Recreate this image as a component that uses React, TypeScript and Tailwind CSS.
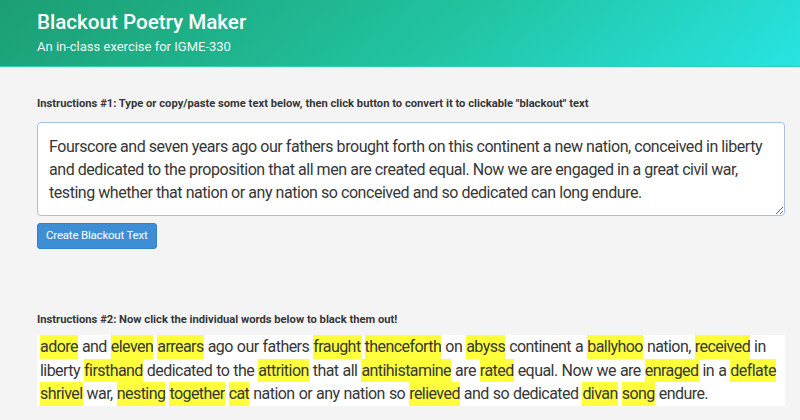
import React from "react";

const lines = [
  "Fourscore and seven years ago our fathers brought forth on this continent a new nation, conceived in liberty",
  "and dedicated to the proposition that all men are created equal. Now we are engaged in a great civil war,",
  "testing whether that nation or any nation so conceived and so dedicated can long endure.",
];

const wordLines: [string, boolean][][] = [
  [["adore", true], ["and", false], ["eleven", true], ["arrears", true], ["ago", false], ["our", false], ["fathers", false], ["fraught", true], ["thenceforth", true], ["on", false], ["abyss", true], ["continent", false], ["a", false], ["ballyhoo", true], ["nation,", false], ["received", true], ["in", false]],
  [["liberty", false], ["firsthand", true], ["dedicated", false], ["to", false], ["the", false], ["attrition", true], ["that", false], ["all", false], ["antihistamine", true], ["are", false], ["rated", true], ["equal.", false], ["Now", false], ["we", false], ["are", false], ["enraged", true], ["in", false], ["a", false], ["deflate", true]],
  [["shrivel", true], ["war,", false], ["nesting", true], ["together", true], ["cat", true], ["nation", false], ["or", false], ["any", false], ["nation", false], ["so", false], ["relieved", true], ["and", false], ["so", false], ["dedicated", false], ["divan", true], ["song", true], ["endure.", false]],
];

export default function App() {
  const font = { fontFamily: 'Roboto, "Noto Sans", sans-serif' };
  return (
    <div className="w-[800px] h-[420px] bg-[#f4f4f4] overflow-hidden" style={font}>
      <header className="h-[67px] border-b border-[#2bd3ae] bg-[linear-gradient(141deg,#1c9e72_0%,#21c3a0_55%,#27e4e2_100%)] px-[37px] pt-[9px] text-white">
        <h1 className="text-[20.6px] font-medium leading-[26px]">Blackout Poetry Maker</h1>
        <p className="text-[13px] leading-[18px] mt-[3px] text-white/95">An in-class exercise for IGME-330</p>
      </header>

      <main className="pl-[37px] pr-[15px] pt-[30px]">
        <p className="text-[11.2px] font-bold text-[#363636] leading-[14px]">
          Instructions #1: Type or copy/paste some text below, then click button to convert it to clickable "blackout" text
        </p>
        <textarea
          className="mt-[11px] block w-full h-[94px] resize-y rounded-[4px] border border-[#a8c0e8] bg-white px-[11px] pt-[12px] text-[16px] leading-[23px] text-[#363636] outline-none tracking-[-0.45px] whitespace-pre overflow-hidden"
          defaultValue={lines.join("\n")}
          style={font}
        />
        <button className="mt-[7px] h-[26px] px-[8px] rounded-[3px] bg-[#3d8ed4] border border-[#3583c8] text-white text-[11.5px] tracking-[-0.2px] leading-none">
          Create Blackout Text
        </button>

        <p className="mt-[64px] text-[11.2px] font-bold text-[#363636] leading-[14px]">
          Instructions #2: Now click the individual words below to black them out!
        </p>
        <div className="mt-[8px] bg-white px-[3px] text-[16px] leading-[23.5px] text-[#363636] tracking-[-0.55px] whitespace-nowrap">
          {wordLines.map((ln, li) => (
            <div key={li} className="flex gap-[4px]">
              {ln.map(([w, h], i) => (
                <span key={i} className={h ? "bg-[#ffff3c] cursor-pointer" : "cursor-pointer"}>{w}</span>
              ))}
            </div>
          ))}
        </div>
      </main>
    </div>
  );
}
